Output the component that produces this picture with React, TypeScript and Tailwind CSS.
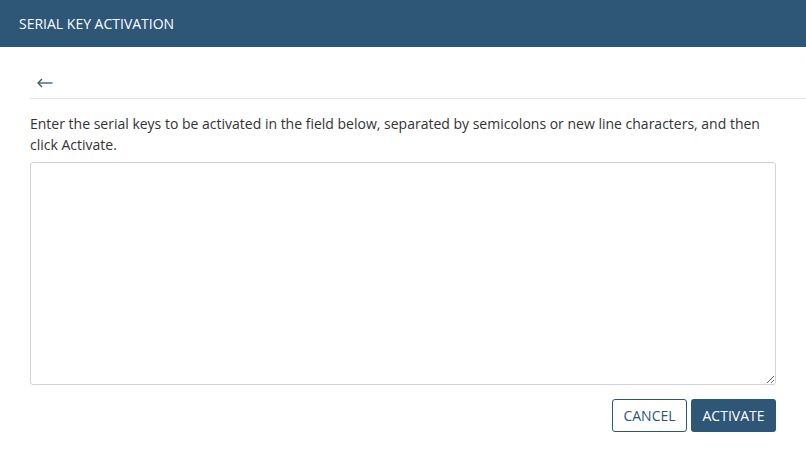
import { useState } from 'react';

export default function App() {
  const [keys, setKeys] = useState('');

  return (
    <div className="min-h-screen bg-white font-['Open_Sans',sans-serif] text-[#333]">
      <header className="flex h-[47px] items-center bg-[#2e5676] px-[19px]">
        <h1 className="text-[14px] font-normal text-white">SERIAL KEY ACTIVATION</h1>
      </header>
      <main className="pl-[30px] pt-[25px]">
        <div className="border-b border-[#e4e4e4] pb-[4px]">
          <button className="flex h-[22px] items-center pl-[7px] text-[#2e5676]" aria-label="Back">
            <svg width="16" height="10" viewBox="0 0 16 10" fill="none" stroke="currentColor" strokeWidth="1.3">
              <path d="M15.5 5H1.2" />
              <path d="M5 1 1 5l4 4" />
            </svg>
          </button>
        </div>
        <div className="pr-[30px]">
          <p className="mt-[14px] text-[14px] leading-[21px]">
            Enter the serial keys to be activated in the field below, separated by semicolons or new line characters, and then click Activate.
          </p>
          <textarea
            value={keys}
            onChange={(e) => setKeys(e.target.value)}
            className="mt-[7px] block h-[223px] w-full rounded-[3px] border border-[#cfd4da] p-2 text-[14px] outline-none"
          />
          <div className="mt-[14px] flex justify-end gap-[4px]">
            <button className="h-[33px] w-[75px] rounded-[3px] border border-[#2e5676] text-[14px] text-[#2e5676]">
              CANCEL
            </button>
            <button className="h-[33px] w-[85px] rounded-[3px] bg-[#2e5676] text-[14px] text-white">
              ACTIVATE
            </button>
          </div>
        </div>
      </main>
    </div>
  );
}
